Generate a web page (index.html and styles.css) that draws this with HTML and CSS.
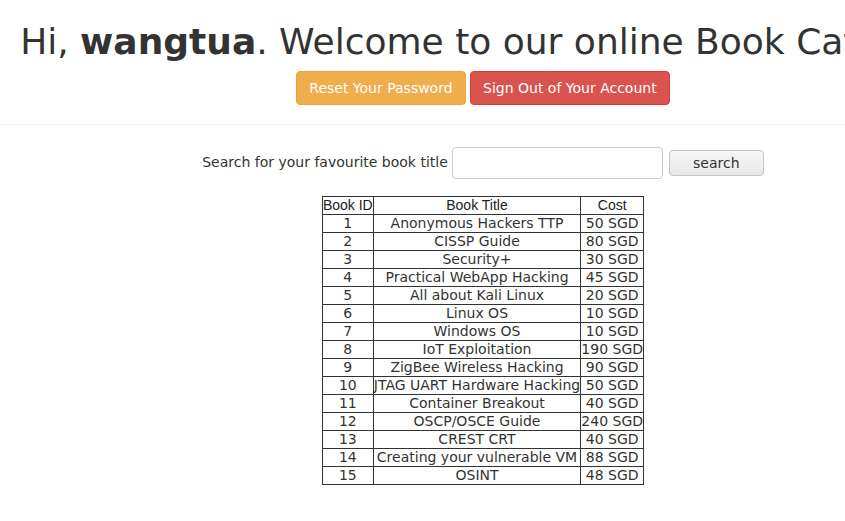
FILE: index.html
```html
<!DOCTYPE html>
<html lang="en">
<head>
<meta charset="utf-8">
<title>Welcome</title>
<link rel="stylesheet" href="styles.css">
</head>
<body>
<div class="page">
  <div class="page-header">
    <h1>Hi, <b>wangtua</b>. Welcome to our online Book Catalog.</h1>
    <p class="actions">
      <a href="#" class="btn btn-warning">Reset Your Password</a>
      <a href="#" class="btn btn-danger">Sign Out of Your Account</a>
    </p>
  </div>
  <form class="search">
    <label for="q">Search for your favourite book title</label>
    <input id="q" type="text" class="search-input">
    <button type="button" class="search-btn">search</button>
  </form>
  <table class="books">
    <thead>
      <tr><th class="c-id">Book ID</th><th class="c-title">Book Title</th><th class="c-cost">Cost</th></tr>
    </thead>
    <tbody>
      <tr><td>1</td><td>Anonymous Hackers TTP</td><td>50 SGD</td></tr>
      <tr><td>2</td><td>CISSP Guide</td><td>80 SGD</td></tr>
      <tr><td>3</td><td>Security+</td><td>30 SGD</td></tr>
      <tr><td>4</td><td>Practical WebApp Hacking</td><td>45 SGD</td></tr>
      <tr><td>5</td><td>All about Kali Linux</td><td>20 SGD</td></tr>
      <tr><td>6</td><td>Linux OS</td><td>10 SGD</td></tr>
      <tr><td>7</td><td>Windows OS</td><td>10 SGD</td></tr>
      <tr><td>8</td><td>IoT Exploitation</td><td>190 SGD</td></tr>
      <tr><td>9</td><td>ZigBee Wireless Hacking</td><td>90 SGD</td></tr>
      <tr><td>10</td><td>JTAG UART Hardware Hacking</td><td>50 SGD</td></tr>
      <tr><td>11</td><td>Container Breakout</td><td>40 SGD</td></tr>
      <tr><td>12</td><td>OSCP/OSCE Guide</td><td>240 SGD</td></tr>
      <tr><td>13</td><td>CREST CRT</td><td>40 SGD</td></tr>
      <tr><td>14</td><td>Creating your vulnerable VM</td><td>88 SGD</td></tr>
      <tr><td>15</td><td>OSINT</td><td>48 SGD</td></tr>
    </tbody>
  </table>
</div>
</body>
</html>
```

FILE: styles.css
```css
html, body {
  margin: 0;
  padding: 0;
  background: #fff;
}
body {
  font-family: "DejaVu Sans", "Helvetica Neue", Helvetica, Arial, sans-serif;
  font-size: 14px;
  line-height: 1.42857;
  color: #333;
  overflow-x: hidden;
}
.page {
  width: 966px;
  text-align: center;
}
.page-header {
  padding-bottom: 9px;
  border-bottom: 1px solid #eee;
}
.page-header h1 {
  margin: 22px 0 9px;
  font-size: 36px;
  font-weight: 500;
  line-height: 1.1;
  white-space: nowrap;
  color: #333;
}
.page-header h1 b {
  font-weight: bold;
}
.actions {
  margin: 0 0 10px;
}
.btn {
  display: inline-block;
  padding: 6px 12px;
  font-size: 14px;
  line-height: 20px;
  border: 1px solid transparent;
  border-radius: 4px;
  color: #fff;
  text-decoration: none;
  vertical-align: middle;
}
.btn-warning {
  background: #f0ad4e;
  border-color: #eea236;
}
.btn-danger {
  background: #d9534f;
  border-color: #d43f3a;
}
.search {
  display: flex;
  justify-content: center;
  align-items: center;
  margin: 22px 0 17px;
}
.search label {
  margin-right: 4px;
}
.search-input {
  box-sizing: border-box;
  width: 211px;
  height: 32px;
  border: 1px solid #ccc;
  border-radius: 4px;
  margin: 0 6px 0 0;
  padding: 0 8px;
  font: inherit;
}
.search-btn {
  box-sizing: border-box;
  width: 95px;
  height: 26px;
  border: 1px solid #c3c3c3;
  border-radius: 4px;
  background: linear-gradient(#f6f6f6, #e8e8e8);
  font-family: "DejaVu Sans", sans-serif;
  font-size: 14px;
  color: #333;
  padding: 0;
}
.books {
  margin: 0 auto;
  border-collapse: collapse;
  color: #333;
}
.books th, .books td {
  border: 1px solid #333;
  padding: 0;
  line-height: 17px;
  text-align: center;
  white-space: nowrap;
}
.books th {
  font-family: "Liberation Sans", Arial, sans-serif;
  font-weight: normal;
  color: #222;
}
.c-id { width: 50px; }
.c-title { width: 206px; }
.c-cost { width: 62px; }
```
